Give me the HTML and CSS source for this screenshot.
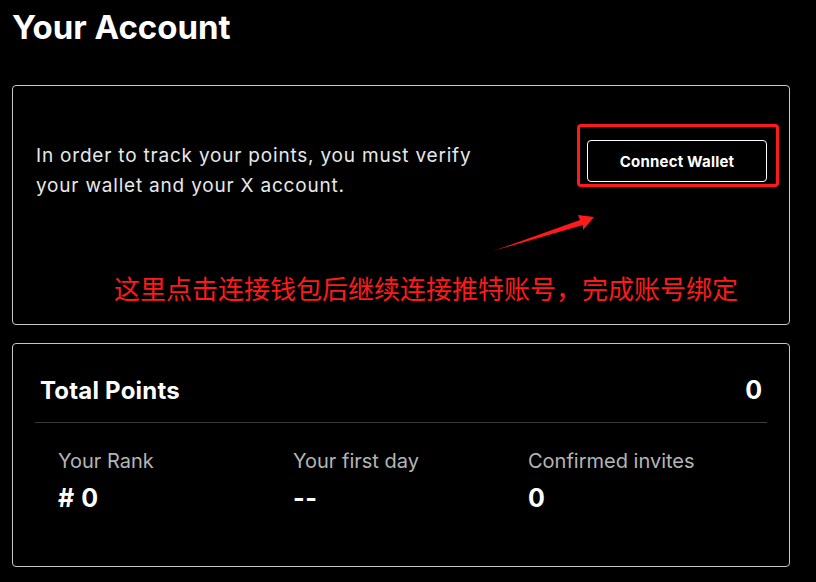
FILE: index.html
```html
<!DOCTYPE html>
<html>
<head>
  <meta charset="utf-8">
  <title>Your Account</title>
  <link rel="stylesheet" href="styles.css">
</head>
<body>
  <h1 class="page-title">Your Account</h1>

  <section class="card verify-card">
    <div class="verify-row">
      <p class="verify-text">In order to track your points, you must verify your wallet and your X account.</p>
      <button class="connect-btn" type="button">Connect Wallet</button>
    </div>

    <!-- annotation layer -->
    <div class="note-box"></div>
    <svg class="note-arrow" width="110" height="45" viewBox="0 0 110 45">
      <polygon points="4,41 91,10 89,5 105,7 94,20 94,15" fill="#ff1a1a"/>
    </svg>
    <p class="note-text">这里点击连接钱包后继续连接推特账号，完成账号绑定</p>
  </section>

  <section class="card points-card">
    <div class="points-head">
      <h2 class="points-title">Total Points</h2>
      <span class="points-total">0</span>
    </div>
    <div class="stats">
      <div class="stat">
        <div class="stat-label">Your Rank</div>
        <div class="stat-value"># 0</div>
      </div>
      <div class="stat">
        <div class="stat-label">Your first day</div>
        <div class="stat-value">--</div>
      </div>
      <div class="stat">
        <div class="stat-label">Confirmed invites</div>
        <div class="stat-value">0</div>
      </div>
    </div>
  </section>
</body>
</html>
```

FILE: styles.css
```css
/* basic layout */
body {
  margin: 0;
  padding: 0 26px 0 12px;
  background: #000;
  color: #fff;
  font-family: Inter, "Noto Sans", sans-serif;
}

.page-title {
  margin: 0;
  padding-top: 6px;
  font-size: 33px;
  line-height: 42px;
  font-weight: 700;
}

.card {
  border: 1px solid #c8c8c8;
  border-radius: 4px;
  box-sizing: border-box;
}

/* verify card */
.verify-card {
  position: relative;
  height: 240px;
  margin-top: 37px;
  padding: 54px 22px 0 23px;
}

.verify-row {
  display: flex;
  justify-content: space-between;
  align-items: flex-start;
}

.verify-text {
  margin: 1px 0 0;
  max-width: 470px;
  font-size: 19px;
  line-height: 30px;
  letter-spacing: 0.8px;
  color: #e8e8e8;
}

.connect-btn {
  width: 180px;
  height: 42px;
  background: #000;
  color: #fff;
  border: 1px solid #fff;
  border-radius: 4px;
  font-family: Inter, sans-serif;
  font-size: 15px;
  font-weight: 700;
  letter-spacing: 0.2px;
  cursor: pointer;
}

/* red annotation */
.note-box {
  position: absolute;
  left: 564px;
  top: 38px;
  width: 202px;
  height: 63px;
  border: 3px solid #ff1a1a;
  border-radius: 4px;
  box-sizing: border-box;
}

.note-arrow {
  position: absolute;
  left: 476px;
  top: 124px;
}

.note-text {
  position: absolute;
  left: 101px;
  top: 186px;
  margin: 0;
  font-family: "Noto Sans CJK SC", sans-serif;
  font-size: 26px;
  line-height: 32px;
  color: #ff1a1a;
}

/* points card */
.points-card {
  margin-top: 18px;
  height: 224px;
  padding: 27px 22px 0;
}

.points-head {
  display: flex;
  justify-content: space-between;
  align-items: center;
  height: 38px;
  padding: 0 5px;
  margin-bottom: 13px;
}

.points-title {
  margin: 0;
  font-size: 24px;
  font-weight: 700;
  letter-spacing: 0.2px;
}

.points-total {
  font-size: 25px;
  font-weight: 700;
}

.stats {
  display: grid;
  grid-template-columns: 235px 235px 1fr;
  border-top: 1px solid #3a3a3a;
  padding: 26px 0 0 23px;
}

.stat-label {
  font-size: 20px;
  line-height: 24px;
  color: #b5b5b5;
}

.stat-value {
  margin-top: 10px;
  font-size: 25px;
  line-height: 30px;
  font-weight: 700;
  letter-spacing: 0.5px;
}
```
